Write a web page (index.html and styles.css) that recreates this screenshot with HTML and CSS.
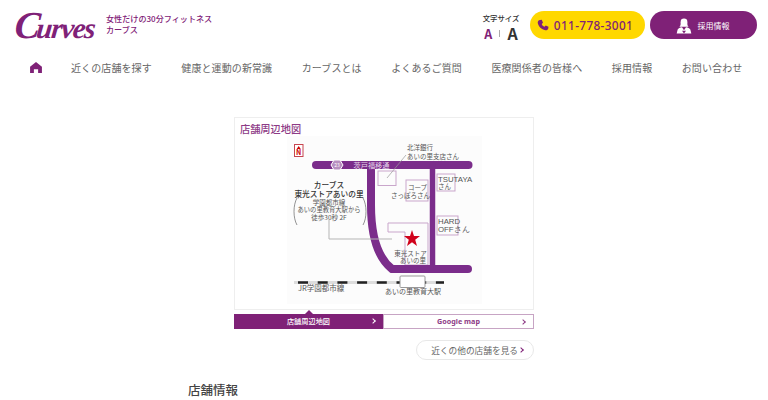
FILE: index.html
```html
<!DOCTYPE html>
<html lang="ja">
<head>
<meta charset="utf-8">
<title>Curves</title>
<link rel="stylesheet" href="styles.css">
</head>
<body>
<header class="header">
  <div class="brand">
    <span class="logo"><span class="logo-c">C</span><span class="logo-rest">urves</span></span>
    <p class="tagline">女性だけの30分フィットネス<br>カーブス</p>
  </div>
  <div class="tools">
    <div class="fontsize">
      <span class="fontsize-label">文字サイズ</span>
      <div class="fontsize-row"><span class="a-small">A</span><span class="a-sep"></span><span class="a-large">A</span></div>
    </div>
    <a class="pill tel">
      <svg class="tel-icon" viewBox="0 0 24 24"><path d="M6 2 L9.500 1.500 L12 7.500 L9.500 10 C10.500 13 12 14.500 15 15.500 L17.500 13 L23 15.500 L22.500 19 C22 22 19 23 16.500 22.500 C9 21 3 15 1.500 8 C1 5 3 2.500 6 2Z"/></svg>
      <span>011-778-3001</span>
    </a>
    <a class="pill recruit">
      <svg class="recruit-icon" viewBox="0 0 24 24"><circle cx="12" cy="6.500" r="5"/><path d="M7 7 C7 11 7 12 5 14 L19 14 C17 12 17 11 17 7Z"/><path d="M1 24 L2.500 18 C3.500 16 6 15 9 14.500 L12 19 L15 14.500 C18 15 20.500 16 21.500 18 L23 24Z"/><path d="M9 20 L15 20 L12 24Z" fill="#7f2177"/></svg>
      <span>採用情報</span>
    </a>
  </div>
</header>

<nav class="nav">
  <a class="nav-home"><svg viewBox="0 0 14 13"><path d="M7 0 L14 5.500 L14 13 L9.500 13 L9.500 8.500 L4.500 8.500 L4.500 13 L0 13 L0 5.500Z"/></svg></a>
  <a>近くの店舗を探す</a>
  <a>健康と運動の新常識</a>
  <a>カーブスとは</a>
  <a>よくあるご質問</a>
  <a>医療関係者の皆様へ</a>
  <a>採用情報</a>
  <a>お問い合わせ</a>
</nav>

<main class="main">
  <section class="map-section">
    <div class="map-card">
      <h2 class="map-title">店舗周辺地図</h2>
      <svg class="map" viewBox="287 136 195 168" width="195" height="168">
        <rect x="287" y="136" width="195" height="168" fill="#fcfcfc"/>
        <g fill="none" stroke="#c9a6cb" stroke-width="1">
          <rect x="378" y="171" width="18" height="14.500"/>
          <rect x="406" y="180" width="22" height="21"/>
          <rect x="437" y="174" width="18" height="17"/>
          <rect x="437" y="216" width="21" height="19"/>
          <path d="M388 223 L428 223 L428 265 L405 265 L405 232 L388 232Z"/>
        </g>
        <path class="road" d="M316 165 L468.500 165" stroke-width="8"/>
        <path class="road" d="M432.500 165 L432.500 268" stroke-width="5.500"/>
        <path class="road" d="M371 165 L371 205 C371 235 378 258 392 269 L468 269" stroke-width="8"/>
        <path d="M329 220 L329 239 L392 239" fill="none" stroke="#b5b5b5" stroke-width="1"/>
        <rect x="294.500" y="144.500" width="8.500" height="12" fill="#fff" stroke="#c7454f" stroke-width="1"/>
        <path d="M298.700 146 L300.700 149 L296.700 149Z" fill="#c00"/>
        <text x="298.700" y="155" class="m m-n">N</text>
        <path d="M331 165 L334 160 L340 160 L343 165 L340 170 L334 170Z" fill="#b88fc0" stroke="#fff" stroke-width="1"/>
        <text x="337" y="167" class="m m-mini">23</text>
        <text x="371.500" y="168" class="m m-road">茨戸福移通</text>
        <path d="M387 178 L406 155" stroke="#999" stroke-width=".7" fill="none"/>
        <text x="407" y="150" class="m m-s ml">北洋銀行</text>
        <text x="407" y="158.500" class="m m-s ml">あいの里支店さん</text>
        <text x="408" y="190" class="m m-s ml">コープ</text>
        <text x="391" y="198" class="m m-s ml">さっぽろさん</text>
        <text x="438" y="182" class="m m-lat ml">TSUTAYA</text>
        <text x="438" y="189" class="m m-s ml">さん</text>
        <text x="438" y="224" class="m m-lat ml">HARD</text>
        <text x="438" y="232" class="m m-lat ml">OFFさん</text>
        <text x="329" y="188" class="m m-b">カーブス</text>
        <text x="329" y="196.500" class="m m-b">東光ストアあいの里</text>
        <text x="329" y="204.500" class="m m-s">学園都市線</text>
        <text x="329" y="212" class="m m-s2">あいの里教育大駅から</text>
        <text x="329" y="219.500" class="m m-s">徒歩30秒 2F</text>
        <path d="M297 198 C293 205 293 218 297 225 M363 198 C367 205 367 218 363 225" stroke="#666" stroke-width=".7" fill="none"/>
        <path d="M412 230 L414 236 L420 236 L415.200 239.700 L417 246 L412 242.200 L407 246 L408.800 239.700 L404 236 L410 236Z" fill="#d0021b"/>
        <text x="410.500" y="256" class="m m-s">東光ストア</text>
        <text x="413" y="263" class="m m-s">あいの里</text>
        <rect x="294" y="281" width="150" height="3" fill="#ddd"/>
        <path class="rail" d="M294 282.500 L444 282.500"/>
        <rect x="400" y="276" width="25" height="11.500" rx="1" fill="#fff" stroke="#999" stroke-width="1"/>
        <text x="298" y="291" class="m m-s3 ml">JR学園都市線</text>
        <text x="413" y="294" class="m m-s4">あいの里教育大駅</text>
      </svg>
    </div>
    <div class="tabs">
      <a class="tab tab-active">店舗周辺地図<span class="chev"></span></a>
      <a class="tab tab-plain">Google map<span class="chev"></span></a>
    </div>
    <div class="more-row">
      <a class="more">近くの他の店舗を見る<span class="chev"></span></a>
    </div>
  </section>
  <h2 class="info-title">店舗情報</h2>
</main>
</body>
</html>
```

FILE: styles.css
```css
* { box-sizing: border-box; }
html, body { margin: 0; padding: 0; }
body {
  width: 768px;
  height: 400px;
  overflow: hidden;
  background: #fff;
  color: #555;
  font-family: "Noto Sans CJK JP", "Noto Sans", sans-serif;
}
a { color: inherit; text-decoration: none; }
p, h2 { margin: 0; }

.header {
  display: flex;
  justify-content: space-between;
  align-items: flex-start;
  height: 51px;
  padding: 11px 11px 0 15px;
}
.brand { display: flex; align-items: flex-start; gap: 10px; }
.logo {
  display: flex;
  align-items: baseline;
  width: 81px;
  height: 30px;
  font-family: "Liberation Serif", serif;
  font-style: italic;
  font-weight: 700;
  line-height: 28px;
  color: #7f2177;
  white-space: nowrap;
  transform: skewX(-6deg);
}
.logo-c { font-size: 38px; letter-spacing: -3.500px; }
.logo-rest { font-size: 29px; letter-spacing: -1.300px; }
.tagline {
  margin-top: 2px;
  font-size: 8.100px;
  line-height: 11px;
  font-weight: 500;
  color: #7f2177;
  white-space: nowrap;
}
.tools { display: flex; align-items: flex-start; gap: 5px; }
.fontsize {
  display: flex;
  flex-direction: column;
  align-items: center;
  width: 40px;
  margin-right: 4px;
  padding-top: 2px;
}
.fontsize-label { font-size: 7.400px; line-height: 10px; font-weight: 500; color: #333; white-space: nowrap; }
.fontsize-row { display: flex; align-items: center; gap: 7px; height: 18px; margin-top: 1px; }
.a-small { font-size: 12.500px; font-weight: 700; color: #7f2177; }
.a-large { font-size: 16px; font-weight: 700; color: #333; }
.a-sep { width: 1px; height: 7px; background: #aaa; }
.pill {
  display: flex;
  align-items: center;
  justify-content: center;
  height: 28px;
  border-radius: 14px;
  white-space: nowrap;
}
.tel {
  width: 115px;
  gap: 5px;
  padding-right: 5px;
  background: #ffd800;
  color: #7f2177;
  font-family: "Noto Sans", sans-serif;
  font-size: 11.800px;
  font-weight: 500;
  letter-spacing: .35px;
}
.tel-icon { width: 12px; height: 12px; fill: #7f2177; }
.recruit {
  width: 107px;
  gap: 6px;
  padding-right: 2px;
  background: #7f2177;
  color: #fff;
  font-size: 8px;
}
.recruit-icon { width: 16px; height: 17px; fill: #fff; }

.nav {
  display: flex;
  align-items: center;
  height: 32px;
  padding-left: 30px;
  font-size: 10px;
  letter-spacing: .1px;
  color: #666;
}
.nav a { white-space: nowrap; margin-right: 29.500px; }
.nav-home { display: flex; }
.nav .nav-home { margin-right: 29px; }
.nav-home svg { width: 12px; height: 11px; fill: #7f2177; }

.main { padding-top: 34px; }
.map-section { width: 300px; margin-left: 234px; }
.map-card {
  display: flex;
  flex-direction: column;
  height: 193px;
  padding: 4px 0 0 5px;
  border: 1px solid #eee;
}
.map-title {
  height: 14px;
  font-size: 10.200px;
  line-height: 14px;
  font-weight: 500;
  color: #8d3a86;
}
.map { display: block; margin-left: 47px; }
.road { fill: none; stroke: #7b2d8b; stroke-linecap: round; }
.rail { fill: none; stroke: #222; stroke-width: 2.500; stroke-dasharray: 10 9.700; stroke-dashoffset: -4; }
.m { text-anchor: middle; fill: #555; font-family: "Noto Sans CJK JP", sans-serif; }
.ml { text-anchor: start; }
.m-s { font-size: 6.500px; }
.m-s2 { font-size: 6.300px; }
.m-s3 { font-size: 7.500px; }
.m-s4 { font-size: 7px; }
.m-lat { font-size: 7.800px; font-family: "Liberation Sans", sans-serif; }
.m-b { font-size: 7.700px; font-weight: 500; fill: #333; }
.m-road { font-size: 7.200px; fill: #e6d5ea; }
.m-mini { font-size: 5px; fill: #fff; }
.m-n { font-size: 7px; font-weight: 700; fill: #c00; }

.tabs { display: flex; height: 15px; margin-top: 4px; }
.tab {
  position: relative;
  display: flex;
  flex: 1;
  align-items: center;
  justify-content: center;
  padding-bottom: 1px;
  font-size: 7.200px;
  font-weight: 500;
}
.tab-active { background: #7f2177; color: #fff; }
.tab-active::before {
  content: "";
  position: absolute;
  top: -4px;
  left: 71px;
  border-left: 4px solid transparent;
  border-right: 4px solid transparent;
  border-bottom: 4px solid #7f2177;
}
.tab-plain {
  border: 1px solid #c7a4c4;
  background: #fff;
  color: #8d3a86;
  font-family: "Noto Sans", sans-serif;
  font-size: 7.200px;
  font-weight: 700;
}
.tab .chev { position: absolute; right: 8px; top: 5px; }
.chev {
  display: inline-block;
  width: 4px;
  height: 4px;
  border-top: 1.300px solid currentColor;
  border-right: 1.300px solid currentColor;
  transform: rotate(45deg);
}
.more-row { display: flex; justify-content: flex-end; margin-top: 11px; }
.more {
  display: flex;
  align-items: center;
  justify-content: flex-end;
  width: 118px;
  height: 20px;
  padding-right: 10px;
  border: 1px solid #e8e8e8;
  border-radius: 10px;
  font-size: 8.700px;
  color: #666;
  white-space: nowrap;
}
.more .chev { margin-left: 1px; color: #7f2177; }
.info-title {
  margin: 21px 0 0 188px;
  font-size: 12.500px;
  line-height: 17px;
  font-weight: 500;
  color: #444;
}
```
